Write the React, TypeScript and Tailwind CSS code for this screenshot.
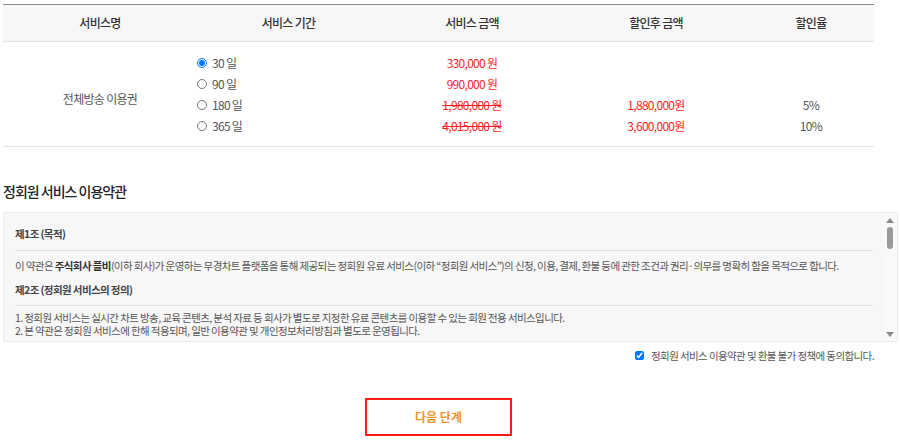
const font = "font-['Noto_Sans_CJK_KR','Noto_Sans',sans-serif]";

type Plan = {
  days: string;
  price: string;
  struck: boolean;
  discounted?: string;
  rate?: string;
};

const plans: Plan[] = [
  { days: "30 일", price: "330,000 원", struck: false },
  { days: "90 일", price: "990,000 원", struck: false },
  { days: "180 일", price: "1,980,000 원", struck: true, discounted: "1,880,000원", rate: "5%" },
  { days: "365 일", price: "4,015,000 원", struck: true, discounted: "3,600,000원", rate: "10%" },
];

const cols = "grid grid-cols-[194px_183px_184px_184px_126px]";

function PlanTable() {
  return (
    <div className="w-[871px] border-t border-[#8c8c8c] tracking-[-0.7px]">
      <div className={`${cols} h-[37px] items-center border-b border-[#e2e2e2] bg-[#f7f7f7] text-[12px] font-medium text-[#333]`}>
        <div className="text-center">서비스명</div>
        <div className="text-center">서비스 기간</div>
        <div className="text-center">서비스 금액</div>
        <div className="text-center">할인후 금액</div>
        <div className="text-center">할인율</div>
      </div>
      <div className={`${cols} border-b border-[#e2e2e2] py-[10px] text-[12px] text-[#555]`}>
        <div className="flex items-center justify-center pt-[9px]">전체방송 이용권</div>
        <div className="flex flex-col">
          {plans.map((p, i) => (
            <label key={p.days} className="flex h-[21px] items-center gap-[5px]">
              <input
                type="radio"
                name="plan"
                defaultChecked={i === 0}
                className="h-[10px] w-[10px] accent-[#0075ff]"
              />
              <span>{p.days}</span>
            </label>
          ))}
        </div>
        <div className="flex flex-col text-[#ff1f1f]">
          {plans.map((p) => (
            <div key={p.price} className={`flex h-[21px] items-center justify-center ${p.struck ? "line-through" : ""}`}>
              {p.price}
            </div>
          ))}
        </div>
        <div className="flex flex-col text-[#ff1f1f]">
          {plans.map((p) => (
            <div key={p.days} className="flex h-[21px] items-center justify-center">
              {p.discounted ?? ""}
            </div>
          ))}
        </div>
        <div className="flex flex-col">
          {plans.map((p) => (
            <div key={p.days} className="flex h-[21px] items-center justify-center">
              {p.rate ?? ""}
            </div>
          ))}
        </div>
      </div>
    </div>
  );
}

function FakeScrollbar() {
  return (
    <div className="flex w-[14px] shrink-0 flex-col items-center bg-[#f9f9f9] pt-[4px] pb-[4px]">
      <svg width="8" height="5" viewBox="0 0 8 5" className="mt-[1px]">
        <path d="M4 0 L8 5 L0 5 Z" fill="#8a8a8a" />
      </svg>
      <div className="mt-[4px] h-[22px] w-[6px] rounded-full bg-[#9a9a9a]" />
      <div className="flex-1" />
      <svg width="8" height="5" viewBox="0 0 8 5">
        <path d="M0 0 L8 0 L4 5 Z" fill="#8a8a8a" />
      </svg>
    </div>
  );
}

function Terms() {
  return (
    <div className="flex h-[130px] w-[895px] border border-[#ececec] bg-[#f7f7f7]">
      <div className="flex-1 overflow-hidden px-[11px] pr-[10px] pt-[13px] text-[10.5px] tracking-[-0.6px] text-[#555]">
        <div className="border-b border-[#e0e0e0] pb-[8px] font-bold leading-[16px] text-[#444]">제1조 (목적)</div>
        <p className="mt-[7px] whitespace-nowrap leading-[16px]">
          이 약관은 <b className="text-[#333]">주식회사 플비</b>(이하 회사)가 운영하는 무경차트 플랫폼을 통해 제공되는 정회원 유료 서비스(이하 “정회원 서비스”)의 신청, 이용, 결제, 환불 등에 관한 조건과 권리·의무를 명확히 함을 목적으로 합니다.
        </p>
        <div className="mt-[8px] border-b border-[#e0e0e0] pb-[7px] font-bold leading-[16px] text-[#444]">제2조 (정회원 서비스의 정의)</div>
        <div className="mt-[5px] leading-[13px]">
          <p>1. 정회원 서비스는 실시간 차트 방송, 교육 콘텐츠, 분석 자료 등 회사가 별도로 지정한 유료 콘텐츠를 이용할 수 있는 회원 전용 서비스입니다.</p>
          <p>2. 본 약관은 정회원 서비스에 한해 적용되며, 일반 이용약관 및 개인정보처리방침과 별도로 운영됩니다.</p>
        </div>
      </div>
      <FakeScrollbar />
    </div>
  );
}

export default function App() {
  return (
    <div className={`${font} min-h-[443px] bg-white pl-[3px] pt-[4px]`}>
      <PlanTable />
      <h2 className="mt-[34px] text-[14px] font-medium leading-[20px] tracking-[-1px] text-[#222]">정회원 서비스 이용약관</h2>
      <div className="mt-[11px]">
        <Terms />
      </div>
      <div className="mt-[6px] flex w-[871px] items-center justify-end gap-[7px] text-[10.5px] tracking-[-0.6px] text-[#555]">
        <input type="checkbox" defaultChecked className="h-[9px] w-[9px] accent-[#0075ff]" />
        <span>정회원 서비스 이용약관 및 환불 불가 정책에 동의합니다.</span>
      </div>
      <div className="mt-[34px] flex w-[871px] justify-center">
        <button className="h-[38px] w-[147px] border-2 border-[#ff1a1a] bg-white text-[12px] font-bold text-[#f0962e]">
          다음 단계
        </button>
      </div>
    </div>
  );
}
